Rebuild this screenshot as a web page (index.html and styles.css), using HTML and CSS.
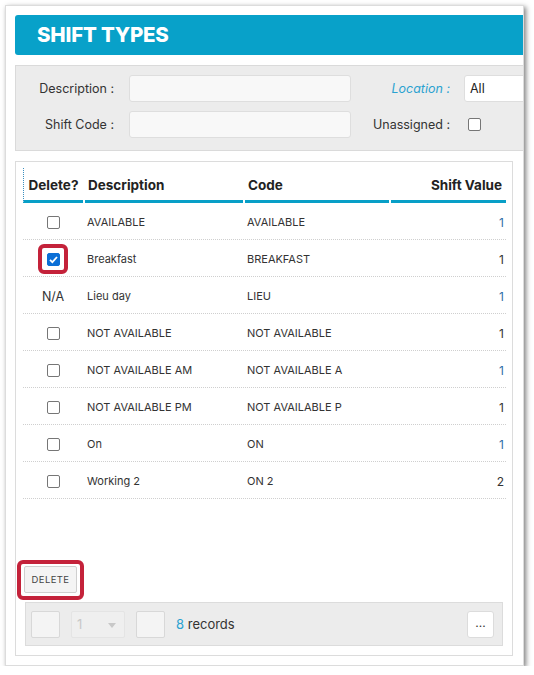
FILE: index.html
```html
<!DOCTYPE html>
<html>
<head>
<meta charset="utf-8">
<link rel="stylesheet" href="styles.css">
</head>
<body>
<div class="card">
  <div class="title">SHIFT TYPES</div>
  <div class="filters">
    <div class="frow">
      <label class="lbl">Description :</label>
      <div class="inp"></div>
      <label class="lbl lbl2 loc">Location :</label>
      <div class="inp sel">All</div>
    </div>
    <div class="frow">
      <label class="lbl">Shift Code :</label>
      <div class="inp"></div>
      <label class="lbl lbl2">Unassigned :</label>
      <span class="cb"></span>
    </div>
  </div>
  <div class="panel">
    <div class="grid head">
      <div class="th c1 focus">Delete?</div>
      <div class="th">Description</div>
      <div class="th">Code</div>
      <div class="th num">Shift Value</div>
    </div>
    <div class="grid row"><div class="c1"><span class="cb"></span></div><div class="td">AVAILABLE</div><div class="td">AVAILABLE</div><div class="td num blue">1</div></div>
    <div class="grid row"><div class="c1"><span class="mark"><span class="cb on"><svg viewBox="0 0 13 13" width="13" height="13"><path d="M3 6.8 L5.4 9.1 L10 4" fill="none" stroke="#fff" stroke-width="1.8"/></svg></span></span></div><div class="td">Breakfast</div><div class="td">BREAKFAST</div><div class="td num">1</div></div>
    <div class="grid row"><div class="c1 na">N/A</div><div class="td">Lieu day</div><div class="td">LIEU</div><div class="td num blue">1</div></div>
    <div class="grid row"><div class="c1"><span class="cb"></span></div><div class="td">NOT AVAILABLE</div><div class="td">NOT AVAILABLE</div><div class="td num">1</div></div>
    <div class="grid row"><div class="c1"><span class="cb"></span></div><div class="td">NOT AVAILABLE AM</div><div class="td">NOT AVAILABLE A</div><div class="td num blue">1</div></div>
    <div class="grid row"><div class="c1"><span class="cb"></span></div><div class="td">NOT AVAILABLE PM</div><div class="td">NOT AVAILABLE P</div><div class="td num">1</div></div>
    <div class="grid row"><div class="c1"><span class="cb"></span></div><div class="td">On</div><div class="td">ON</div><div class="td num blue">1</div></div>
    <div class="grid row"><div class="c1"><span class="cb"></span></div><div class="td">Working 2</div><div class="td">ON 2</div><div class="td num">2</div></div>
    <div class="spacer"></div>
    <div class="btnwrap"><button class="del">DELETE</button></div>
    <div class="pager">
      <span class="pbtn"></span>
      <span class="psel">1<svg class="arr" viewBox="0 0 8 5" width="8" height="5"><path d="M0 0 L8 0 L4 5 Z" fill="#c8c8c8"/></svg></span>
      <span class="pbtn"></span>
      <span class="rec"><span class="n">8</span> records</span>
      <span class="more">...</span>
    </div>
  </div>
</div>
</body>
</html>
```
FILE: styles.css
```css
html, body { margin: 0; padding: 0; background: #fff; }
body { font-family: Inter, "Liberation Sans", sans-serif; color: #333; }

.card {
  margin: 5px 0 0 5px;
  width: 519px;
  height: 661px;
  border: 1px solid #dcdcdc;
  background: #fff;
  box-shadow: 2px 2px 5px rgba(0,0,0,0.5);
  overflow: hidden;
  padding: 9px 0 0 9px;
  box-sizing: border-box;
  position: relative;
}

.title {
  width: 540px;
  height: 40px;
  background: #08a1c9;
  border-radius: 3px 0 0 3px;
  color: #fff;
  font-weight: 800;
  font-size: 20.5px;
  letter-spacing: -0.2px;
  line-height: 40px;
  padding-left: 22px;
  box-sizing: border-box;
}

.filters {
  margin-top: 10px;
  width: 540px;
  height: 86px;
  background: #ececec;
  border: 1px solid #dadada;
  box-sizing: border-box;
  padding-top: 9px;
}
.frow { display: flex; align-items: center; height: 27px; margin-bottom: 9px; }
.frow > * { flex-shrink: 0; }
.lbl { width: 98px; text-align: right; font-size: 12.5px; color: #333; margin-right: 15px; }
.lbl2 { width: 99px; margin-right: 14px; }
.loc { font-style: italic; color: #2aa2d0; }
.inp {
  width: 222px; height: 27px; box-sizing: border-box;
  background: #f8f8f8; border: 1px solid #dedede; border-radius: 3px;
}
.sel { width: 120px; background: #fff; font-size: 12.5px; line-height: 25px; padding-left: 5px; color: #222; }

.cb {
  display: inline-block; width: 11px; height: 11px;
  border: 1px solid #767676; border-radius: 2px; background: #fff;
  margin-left: 4px;
}

.panel {
  margin-top: 10px;
  width: 498px;
  height: 495px;
  border: 1px solid #dcdcdc;
  box-sizing: border-box;
  padding: 6px 6px 9px 7px;
  display: flex;
  flex-direction: column;
}
.grid {
  display: grid;
  grid-template-columns: 60px 158px 144px 115px;
  column-gap: 2px;
}
.head { height: 35px; }
.th {
  font-weight: 700; font-size: 13.5px; color: #222;
  border-bottom: 3px solid #089fc7;
  padding: 9px 0 0 3px; box-sizing: border-box;
}
.th.c1 { text-align: center; padding-left: 0; }
.focus { border-left: 1px dotted #3a8fc0; }
.th.num { text-align: right; padding-right: 4px; }

.row {
  height: 37px;
  border-bottom: 1px dotted #cfcfcf;
  box-sizing: border-box;
  align-items: center;
  font-size: 11px;
  color: #333;
  padding-top: 2px;
}
.row .c1 { display: flex; justify-content: center; align-items: center; }
.row .c1 .cb { margin-left: 0; }
.td { padding-left: 2px; }
.td.num { text-align: right; padding-right: 2px; font-size: 12px; }
.blue { color: #2f6fa8; }
.na { font-size: 12.5px; color: #333; }

.mark {
  position: relative;
  display: inline-flex; align-items: center; justify-content: center;
  width: 30px; height: 30px; box-sizing: border-box;
  border: 4px solid #c4223a; border-radius: 6px;
}
.cb.on {
  background: #0b6fd6; border-color: #0b6fd6; position: relative;
}
.cb.on svg { position: absolute; left: -1px; top: -1px; }

.spacer { flex: 1; }

.btnwrap {
  align-self: flex-start;
  margin-left: -6px;
  padding: 2px 3px 3px 3px;
  border: 4px solid #c4223a;
  border-radius: 6px;
  margin-bottom: 2px;
}
.del {
  display: block;
  width: 53px; height: 27px;
  background: #f4f4f4; border: 1px solid #cfcfcf; border-radius: 2px;
  font-family: Inter, "Liberation Sans", sans-serif;
  font-size: 9.5px; color: #444; letter-spacing: 0.4px; padding: 0;
}

.pager {
  margin-left: 2px;
  width: 478px; height: 44px;
  box-sizing: border-box;
  background: #ececec; border: 1px solid #dcdcdc;
  display: flex; align-items: center;
  padding-left: 5px; padding-right: 8px;
}
.pbtn {
  width: 29px; height: 27px; box-sizing: border-box;
  background: #f4f4f4; border: 1px solid #d8d8d8; border-radius: 2px;
}
.psel {
  margin: 0 11px;
  width: 54px; height: 27px; box-sizing: border-box;
  background: #efefef; border: 1px solid #e4e4e4; border-radius: 2px;
  color: #c8c8c8; font-size: 13px; line-height: 25px; padding-left: 5px;
  position: relative;
}
.arr { position: absolute; right: 8px; top: 11px; }
.rec { margin-left: 11px; font-size: 13px; color: #333; }
.n { color: #2aa2d0; }
.more {
  margin-left: auto;
  width: 27px; height: 27px; box-sizing: border-box;
  background: #fff; border: 1px solid #dcdcdc; border-radius: 3px;
  font-size: 12px; text-align: center; line-height: 22px; color: #333;
}
```
